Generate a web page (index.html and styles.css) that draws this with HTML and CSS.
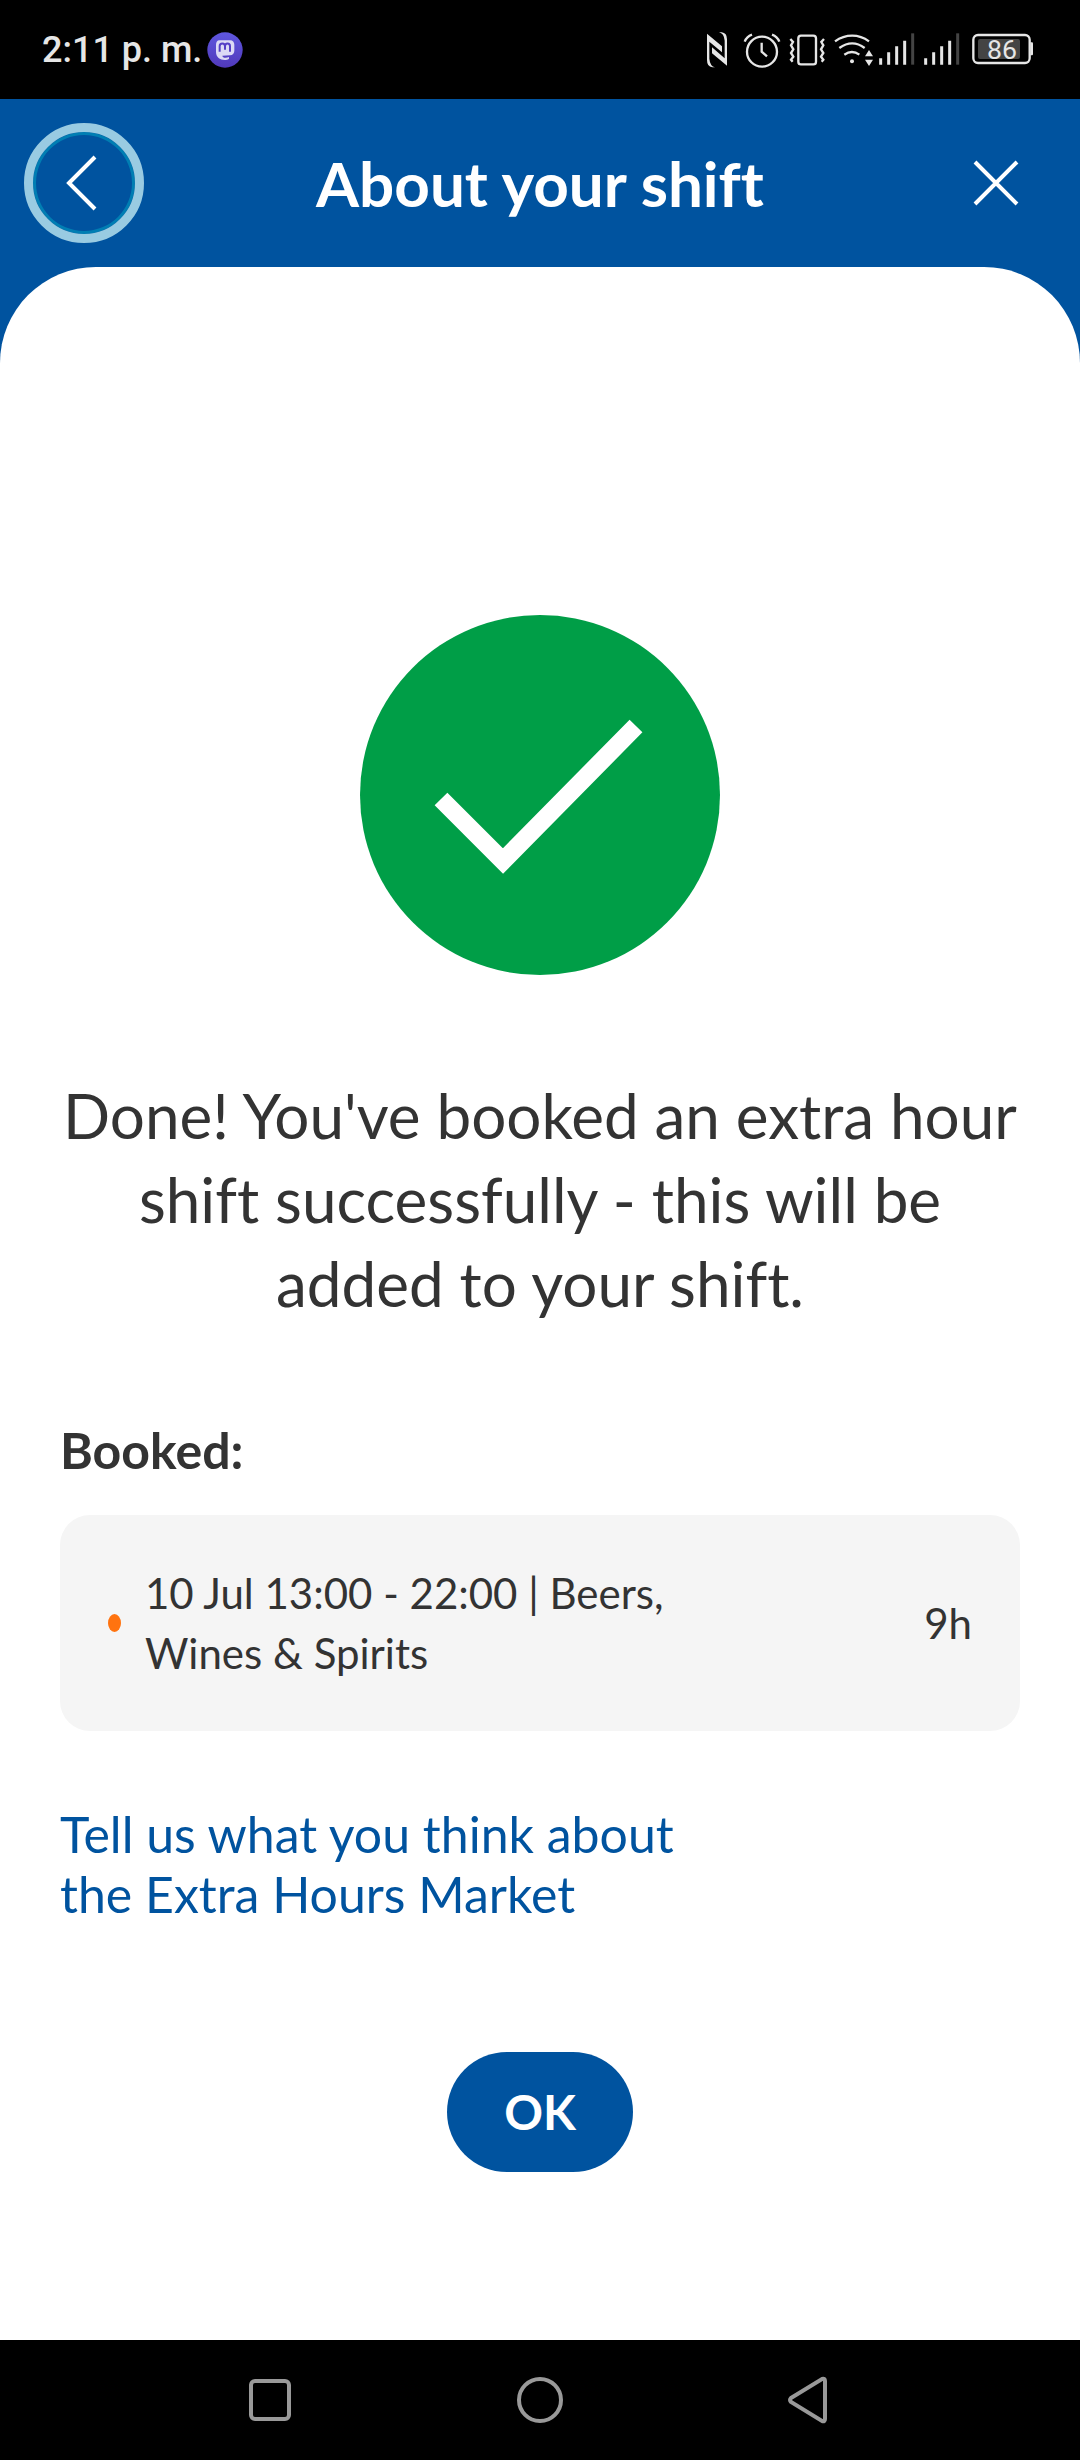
FILE: index.html
```html
<!DOCTYPE html>
<html lang="en">

<head>
    <meta charset="UTF-8">
    <meta name="viewport" content="width=device-width, initial-scale=1.0">
    <title>About your shift</title>
    <link rel="stylesheet" href="styles.css">
</head>

<body>
    <div class="status-bar">
        <span class="clock">2:11 p. m.</span>
        <svg class="mastodon" viewBox="0 0 108 108" aria-hidden="true">
            <defs>
                <linearGradient id="purple" x1="0" y1="0" x2="0" y2="1">
                    <stop offset="0" stop-color="#5f57df" />
                    <stop offset="1" stop-color="#5039ba" />
                </linearGradient>
            </defs>
            <circle cx="54" cy="54" r="53" fill="url(#purple)" />
            <path fill="#dcdaf5" d="M37 25h33c7 0 12 6 12 13v18c0 8-5 13-13 14l-23 1c1 4 4 6 9 6 4 0 8-1 11-2v5c-4 3-8 4-13 4-14 0-26-8-26-24V38c0-7 4-13 10-13z" />
            <path fill="none" stroke="#553fc6" stroke-width="6" d="M38 59V43c0-11 16-11 16 0v10m0-10c0-11 15-11 15 0v16" />
        </svg>
        <div class="status-icons">
            <svg class="status-icon nfc" viewBox="45 60 90 120" aria-hidden="true">
                <path class="solid" d="M51 71L96 109V127L58 95V146Q60 168 75 172H67Q51 170 51 150zM111 167L66 130V112L104 145V92Q102 70 87 67H95Q111 69 111 88z" />
            </svg>
            <svg class="status-icon alarm" viewBox="159 60 114 120" aria-hidden="true">
                <circle cx="216" cy="125" r="45" />
                <path d="M215 98v27l16 14M164 95c4-10 11-17 22-21M268 95c-4-10-11-17-22-21" />
            </svg>
            <svg class="status-icon vibrate" viewBox="297 60 108 120" aria-hidden="true">
                <rect x="325" y="77" width="53" height="86" rx="8" />
                <path d="M301 87l8 9-6 10 7 12-7 11 7 11-7 9 5 6M402 87l-8 9 6 10-7 12 7 11-7 11 7 9-5 6" />
            </svg>
            <svg class="status-icon wifi" viewBox="429 60 111 120" aria-hidden="true">
                <path d="M435 94c32-23 71-23 102 0M448 114c25-18 52-18 76 0M463 134c16-11 30-11 45 0" />
                <circle class="solid" cx="486" cy="154" r="6" />
                <path class="solid" d="M525 139l12-19 12 19zM525 149h24l-12 19z" />
            </svg>
            <svg class="status-icon signal" viewBox="564 60 111 120" aria-hidden="true">
                <path d="M572 145v19M596 127v37M620 109v55M644 92v72" />
                <path class="faint" d="M668 70v94" />
            </svg>
            <svg class="status-icon signal" viewBox="564 60 111 120" aria-hidden="true">
                <path d="M572 145v19M596 127v37M620 109v55M644 92v72" />
                <path class="faint" d="M668 70v94" />
            </svg>
            <svg class="status-icon battery" viewBox="834 60 204 120" role="img" aria-label="Battery 86%">
                <rect x="850" y="75" width="169" height="84" rx="14" />
                <rect class="charge" x="864" y="87" width="126" height="60" rx="6" />
                <path class="solid" d="M1021 97h5q3 0 3 4v31q0 4-3 4h-5z" />
                <text x="936" y="147" text-anchor="middle">86</text>
            </svg>
        </div>
    </div>

    <div class="app">
        <header class="header">
            <button class="back" type="button" aria-label="Back">
                <svg viewBox="0 0 60 60" aria-hidden="true">
                    <path d="M41 4L15 30l26 26" />
                </svg>
            </button>
            <h1 class="title">About your shift</h1>
            <button class="close" type="button" aria-label="Close">
                <svg viewBox="0 0 48 48" aria-hidden="true">
                    <path d="M3 3l42 42M45 3L3 45" />
                </svg>
            </button>
        </header>

        <main class="sheet">
            <svg class="success" viewBox="0 0 360 360" aria-hidden="true">
                <circle cx="180" cy="180" r="180" />
                <path d="M81 184l62 62L276 111" />
            </svg>
            <p class="message">Done! You've booked an extra hour shift successfully - this will be added to your shift.</p>

            <h2 class="booked">Booked:</h2>
            <div class="card">
                <span class="dot"></span>
                <span class="shift">10 Jul 13:00 - 22:00 | Beers, Wines &amp; Spirits</span>
                <span class="hours">9h</span>
            </div>

            <a class="feedback" href="#">Tell us what you think about the Extra Hours Market</a>
            <button class="ok" type="button">OK</button>
        </main>
    </div>

    <nav class="nav-bar">
        <button type="button" aria-label="Recent apps">
            <svg viewBox="0 0 48 48" aria-hidden="true">
                <rect x="5" y="5" width="38" height="38" rx="4" />
            </svg>
        </button>
        <button type="button" aria-label="Home">
            <svg viewBox="0 0 48 48" aria-hidden="true">
                <circle cx="24" cy="24" r="21" />
            </svg>
        </button>
        <button type="button" aria-label="Go back">
            <svg viewBox="0 0 48 48" aria-hidden="true">
                <path d="M5 22L36 3q3-1 3 2v38q0 3-3 2L5 26q-2-2 0-4z" />
            </svg>
        </button>
    </nav>
</body>

</html>
```
FILE: styles.css
```css
* {
    box-sizing: border-box;
}

body {
    display: flex;
    flex-direction: column;
    min-height: 100vh;
    margin: 0;
    background-color: #000;
    color: #333;
    font-family: Lato, "Open Sans", sans-serif;
    font-variant-ligatures: none;
}

h1,
h2,
p {
    margin: 0;
}

button {
    padding: 0;
    border: none;
    background: none;
    color: inherit;
    font-family: inherit;
}

svg {
    display: block;
    fill: none;
}

/* Status bar */
.status-bar {
    display: flex;
    align-items: center;
    height: 99px;
    padding: 0 44px 0 42px;
    color: #e6e6e6;
    font-family: Roboto, sans-serif;
}

.clock {
    font-size: 36px;
    font-weight: 500;
    line-height: 42px;
}

.mastodon {
    width: 36px;
    height: 36px;
    margin-left: 5px;
}

.status-icons {
    display: flex;
    gap: 8px;
    margin-left: auto;
}

.status-icon {
    height: 40px;
    overflow: visible;
    stroke: #e6e6e6;
    stroke-width: 7;
}

.status-icon .solid {
    fill: #e6e6e6;
    stroke: none;
}

.status-icon .faint {
    stroke: #444;
}

.status-icon .charge {
    fill: #444;
    stroke: none;
}

.status-icon text {
    fill: #e6e6e6;
    stroke: none;
    font-size: 80px;
}

.nfc {
    width: 30px;
}

.alarm {
    width: 38px;
}

.vibrate {
    width: 36px;
}

.wifi,
.signal {
    width: 37px;
}

.signal {
    stroke-width: 9;
}

.battery {
    width: 68px;
}

/* App */
.app {
    display: flex;
    flex: 1;
    flex-direction: column;
    background-color: #00539f;
}

.header {
    display: flex;
    align-items: center;
    justify-content: space-between;
    height: 168px;
    padding: 0 24px;
    color: #fff;
}

.back,
.close {
    display: flex;
    align-items: center;
    justify-content: center;
    width: 120px;
    height: 120px;
    border-radius: 50%;
}

.back {
    border: 9px solid #99cbe2;
    box-shadow: inset 0 0 0 3px #007eb3;
}

.back svg {
    width: 60px;
    height: 60px;
}

.close svg {
    width: 48px;
    height: 48px;
}

.back path,
.close path {
    stroke: #fff;
    stroke-width: 4;
}

.title {
    font-size: 62px;
    line-height: 84px;
}

.sheet {
    display: flex;
    flex: 1;
    flex-direction: column;
    padding: 348px 60px 168px;
    border-radius: 96px 96px 0 0;
    background-color: #fff;
}

.success {
    align-self: center;
    width: 360px;
    height: 360px;
}

.success circle {
    fill: #009e47;
}

.success path {
    stroke: #fff;
    stroke-width: 18;
}

.message {
    margin-top: 98px;
    font-size: 62px;
    line-height: 84px;
    text-align: center;
}

.booked {
    margin-top: 95px;
    font-size: 50px;
    line-height: 60px;
}

.card {
    display: flex;
    align-items: center;
    margin-top: 35px;
    padding: 48px;
    border-radius: 30px;
    background-color: #f5f5f5;
    font-size: 42px;
    line-height: 60px;
}

.dot {
    width: 13px;
    height: 18px;
    border-radius: 50%;
    background-color: #ff730f;
}

.shift {
    max-width: 600px;
    margin-left: 24px;
}

.hours {
    margin-left: auto;
}

.feedback {
    max-width: 640px;
    margin-top: 73px;
    color: #00539f;
    font-size: 50px;
    line-height: 60px;
    text-decoration: none;
}

.ok {
    align-self: center;
    height: 120px;
    margin-top: 128px;
    padding: 0 57px;
    border-radius: 60px;
    background-color: #00539f;
    color: #fff;
    font-size: 48px;
    font-weight: bold;
    line-height: 60px;
}

/* Navigation bar */
.nav-bar {
    display: flex;
    justify-content: center;
    gap: 222px;
    padding: 36px 0;
}

.nav-bar svg {
    width: 48px;
    height: 48px;
    stroke: #999;
    stroke-width: 4;
}
```
